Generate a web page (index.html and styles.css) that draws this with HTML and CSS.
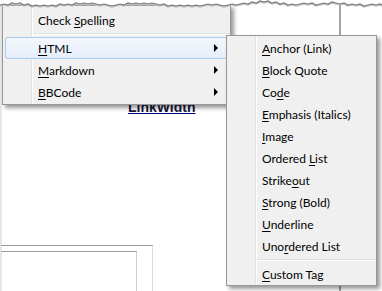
FILE: index.html
```html
<!DOCTYPE html>
<html lang="en">
<head>
    <meta charset="UTF-8">
    <title>Context menu</title>
    <link rel="stylesheet" href="styles.css">
</head>
<body>
    <div class="shot">
        <!-- editor behind the menu -->
        <div class="page">
            <div class="left-pane">
                <div class="link-row"><span class="link-width">LinkWidth</span></div>
                <div class="frame"><div class="frame-inner"></div></div>
            </div>
            <div class="right-pane"></div>
        </div>

        <!-- context menu -->
        <div class="menu main-menu">
            <div class="item"><span>Check <u>S</u>pelling</span></div>
            <div class="sep"></div>
            <div class="item active"><span><u>H</u>TML</span><span class="arrow"></span></div>
            <div class="item"><span><u>M</u>arkdown</span><span class="arrow"></span></div>
            <div class="item"><span><u>B</u>BCode</span><span class="arrow"></span></div>
        </div>

        <!-- HTML submenu -->
        <div class="menu sub-menu">
            <div class="item"><span><u>A</u>nchor (Link)</span></div>
            <div class="item"><span><u>B</u>lock Quote</span></div>
            <div class="item"><span>Co<u>d</u>e</span></div>
            <div class="item"><span><u>E</u>mphasis (Italics)</span></div>
            <div class="item"><span><u>I</u>mage</span></div>
            <div class="item"><span>Ordered <u>L</u>ist</span></div>
            <div class="item"><span>Strike<u>o</u>ut</span></div>
            <div class="item"><span><u>S</u>trong (Bold)</span></div>
            <div class="item"><span><u>U</u>nderline</span></div>
            <div class="item"><span>Uno<u>r</u>dered List</span></div>
            <div class="sep"></div>
            <div class="item"><span><u>C</u>ustom Tag</span></div>
        </div>

        <!-- torn top edge of the screenshot -->
        <svg class="torn" width="382" height="12" viewBox="0 0 382 12">
            <path fill="#fff" d="M0,0 L382,0 L382,5 L380,4 L376,5 L372,4 L368,5 L364,6 L360,4 L356,5 L352,4 L348,5 L344,3 L340,4 L336,3 L332,2 L328,4 L324,3 L320,4 L316,5 L312,3 L308,4 L304,3 L300,4 L296,5 L292,4 L288,5 L284,3 L280,4 L276,2 L272,3 L268,1 L264,2 L260,1 L256,3 L252,2 L248,4 L244,3 L240,4 L236,5 L232,4 L228,5 L224,6 L220,5 L216,4 L212,5 L208,4 L204,5 L200,6 L196,5 L192,6 L188,5 L184,6 L180,5 L176,6 L172,5 L168,6 L164,4 L160,5 L156,4 L152,3 L148,4 L144,3 L140,4 L136,3 L132,4 L128,3 L124,5 L120,4 L116,5 L112,6 L108,5 L104,4 L100,5 L96,4 L92,3 L88,4 L84,3 L80,4 L76,3 L72,5 L68,4 L64,5 L60,4 L56,6 L52,5 L48,6 L44,5 L40,6 L36,5 L32,6 L28,4 L24,5 L20,3 L16,4 L12,3 L8,5 L4,4 L0,5 Z"/>
            <path class="torn-shade" d="M0,6 L4,5 L8,6 L12,4 L16,5 L20,4 L24,6 L28,5 L32,7 L36,6 L40,7 L44,6 L48,7 L52,6 L56,7 L60,5 L64,6 L68,5 L72,6 L76,4 L80,5 L84,4 L88,5 L92,4 L96,5 L100,6 L104,5 L108,6 L112,7 L116,6 L120,5 L124,6 L128,4 L132,5 L136,4 L140,5 L144,4 L148,5 L152,4 L156,5 L160,6 L164,5 L168,7 L172,6 L176,7 L180,6 L184,7 L188,6 L192,7 L196,6 L200,7 L204,6 L208,5 L212,6 L216,5 L220,6 L224,7 L228,6 L232,5 L236,6 L240,5 L244,4 L248,5 L252,3 L256,4 L260,2 L264,3 L268,2 L272,4 L276,3 L280,5 L284,4 L288,6 L292,5 L296,6 L300,5 L304,4 L308,5 L312,4 L316,6 L320,5 L324,4 L328,5 L332,3 L336,4 L340,5 L344,4 L348,6 L352,5 L356,6 L360,5 L364,7 L368,6 L372,5 L376,6 L380,5 L382,6"/>
            <path class="torn-line" d="M0,5 L4,4 L8,5 L12,3 L16,4 L20,3 L24,5 L28,4 L32,6 L36,5 L40,6 L44,5 L48,6 L52,5 L56,6 L60,4 L64,5 L68,4 L72,5 L76,3 L80,4 L84,3 L88,4 L92,3 L96,4 L100,5 L104,4 L108,5 L112,6 L116,5 L120,4 L124,5 L128,3 L132,4 L136,3 L140,4 L144,3 L148,4 L152,3 L156,4 L160,5 L164,4 L168,6 L172,5 L176,6 L180,5 L184,6 L188,5 L192,6 L196,5 L200,6 L204,5 L208,4 L212,5 L216,4 L220,5 L224,6 L228,5 L232,4 L236,5 L240,4 L244,3 L248,4 L252,2 L256,3 L260,1 L264,2 L268,1 L272,3 L276,2 L280,4 L284,3 L288,5 L292,4 L296,5 L300,4 L304,3 L308,4 L312,3 L316,5 L320,4 L324,3 L328,4 L332,2 L336,3 L340,4 L344,3 L348,5 L352,4 L356,5 L360,4 L364,6 L368,5 L372,4 L376,5 L380,4 L382,5"/>
        </svg>
    </div>
</body>
</html>
```

FILE: styles.css
```css
body {
    margin: 0;
    background: #fff;
    font-family: Lato, "Noto Sans", sans-serif;
    font-size: 12px;
    color: #000;
}
.shot {
    position: relative;
    width: 382px;
    height: 291px;
    overflow: hidden;
}

/* background editor */
.page {
    display: flex;
    height: 291px;
    border-left: 2px solid #e6e6e6;
    box-sizing: border-box;
}
.left-pane {
    width: 337px;
    display: flex;
    flex-direction: column;
}
.right-pane {
    flex: 1;
    border-left: 2px solid #a3a3a3;
}
.link-row {
    padding: 99px 0 0 126px;
    line-height: 16px;
}
.link-width {
    font-family: "Liberation Sans", Arial, sans-serif;
    font-weight: bold;
    font-size: 14px;
    color: #1a1a3a;
    text-decoration: underline;
    text-decoration-color: #00007a;
}
.frame {
    margin-top: auto;
    margin-left: -1px;
    width: 151px;
    height: 45px;
    border-top: 1px solid #9b9b9b;
    border-right: 1px solid #dcdcdc;
    display: flex;
    flex-direction: column;
}
.frame-inner {
    margin-top: 5px;
    width: 135px;
    flex: 1;
    border-top: 1px solid #9b9b9b;
    border-right: 1px solid #cfcfcf;
}

/* menus */
.menu {
    position: absolute;
    box-sizing: border-box;
    border: 1px solid #979797;
    background-color: #f0f0f0;
    background-image: linear-gradient(to right, transparent 28px, #e2e3e3 28px, #e2e3e3 29px, #fff 29px, #fff 30px, transparent 30px);
    box-shadow: 3px 3px 4px rgba(0, 0, 0, 0.4);
}
.main-menu {
    left: 2px;
    top: 5px;
    width: 229px;
    padding: 3px 0 1px;
}
.sub-menu {
    left: 226px;
    top: 35px;
    width: 151px;
    padding: 1px 0 0;
}
.item {
    display: flex;
    align-items: center;
    height: 22px;
    margin: 0 2px;
    padding: 0 8px 0 32px;
    box-sizing: border-box;
    border: 1px solid transparent;
    border-radius: 3px;
    white-space: nowrap;
}
.item u {
    text-underline-offset: 2px;
}
.item.active {
    border-color: #a8cbf0;
    background: linear-gradient(#f4f8fd, #e6eefa);
}
.arrow {
    margin-left: auto;
    margin-right: 1px;
    width: 0;
    height: 0;
    border-left: 4px solid #000;
    border-top: 4px solid transparent;
    border-bottom: 4px solid transparent;
}
.sep {
    height: 6px;
    margin-left: 30px;
    background: linear-gradient(transparent 2px, #e0e0e0 2px, #e0e0e0 3px, #fff 3px, #fff 4px, transparent 4px);
}

/* torn top edge */
.torn {
    position: absolute;
    left: 0;
    top: 0;
}
.torn-line {
    fill: none;
    stroke: #7a7a7a;
    stroke-width: 1.2;
}
.torn-shade {
    fill: none;
    stroke: #c4c4c4;
    stroke-width: 1.5;
}
```
